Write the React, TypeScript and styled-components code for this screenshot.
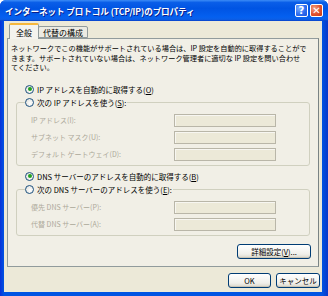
import styled, { createGlobalStyle } from "styled-components";

const Global = createGlobalStyle`
  html, body {
    margin: 0;
    padding: 0;
    background: #ffffff;
  }
  body {
    font-family: "Noto Sans CJK JP", "Noto Sans", sans-serif;
  }
`;

const Win = styled.div`
  width: 328px;
  height: 296px;
  box-sizing: border-box;
  display: flex;
  flex-direction: column;
  background: linear-gradient(to right, #0831d9, #0054e3 4px, #0054e3 calc(100% - 6px), #0a38c8);
  padding: 0 6px 4px 4px;
  border-radius: 6px 6px 0 0;
  overflow: hidden;
`;

const TitleBar = styled.div`
  height: 21px;
  margin: 0 -6px 0 -4px;
  padding: 0 5px 0 5px;
  display: flex;
  align-items: center;
  background: linear-gradient(
    to bottom,
    #3c8cf6 0%,
    #0a5ee8 12%,
    #0054e3 40%,
    #0460f0 80%,
    #0b5fe8 92%,
    #0840c8 100%
  );
`;

const TitleText = styled.div`
  flex: 1;
  color: #ffffff;
  font-size: 8.6px;
  font-weight: bold;
  letter-spacing: -0.1px;
  text-shadow: 1px 1px 0 #0a1e8a;
  white-space: nowrap;
`;

const CapButton = styled.div<{ $close?: boolean }>`
  width: 13px;
  height: 13px;
  margin-left: 2px;
  box-sizing: border-box;
  border: 1px solid #ffffff;
  border-radius: 2px;
  display: flex;
  align-items: center;
  justify-content: center;
  color: #ffffff;
  font-family: "DejaVu Sans", sans-serif;
  font-weight: bold;
  font-size: 10px;
  background: ${(p) =>
    p.$close
      ? "radial-gradient(circle at 30% 30%, #f0a080, #e0512e 55%, #c23a14)"
      : "radial-gradient(circle at 30% 30%, #7eb0ff, #2f6ff0 55%, #1c50d8)"};
`;

const Body = styled.div`
  flex: 1;
  background: #ece9d8;
  padding: 2px 2px 0 3px;
  display: flex;
  flex-direction: column;
`;

const Tabs = styled.div`
  display: flex;
  align-items: flex-end;
  padding-left: 2px;
  position: relative;
  z-index: 1;
`;

const Tab = styled.div<{ $active?: boolean }>`
  box-sizing: border-box;
  height: ${(p) => (p.$active ? "16px" : "12px")};
  padding: 0 ${(p) => (p.$active ? "6px" : "4px")};
  display: flex;
  align-items: center;
  justify-content: center;
  font-size: 8px;
  color: #000000;
  background: ${(p) => (p.$active ? "#f4f3ee" : "#ecebe3")};
  border: 1px solid #919b9c;
  border-bottom: ${(p) => (p.$active ? "none" : "1px solid #919b9c")};
  border-top: ${(p) => (p.$active ? "2px solid #f6b73c" : "1px solid #919b9c")};
  border-radius: 2px 2px 0 0;
  margin-bottom: ${(p) => (p.$active ? "-1px" : "0")};
  margin-left: ${(p) => (p.$active ? "0" : "-1px")};
`;

const Panel = styled.div`
  border: 1px solid #919b9c;
  border-right-color: #7a8384;
  margin-right: 1px;
  padding: 5px 0 7px 3px;
  background: #f1efe6;
  display: flex;
  flex-direction: column;
`;

const Desc = styled.p`
  margin: 0;
  font-size: 7.2px;
  line-height: 9.5px;
  color: #000000;
  white-space: nowrap;
`;

const RadioRow = styled.label<{ $first?: boolean }>`
  display: flex;
  align-items: center;
  height: 11px;
  margin-top: ${(p) => (p.$first ? "11px" : "5px")};
  margin-left: 14px;
  font-size: 7.5px;
  color: #000000;
  white-space: nowrap;
`;

const Radio = styled.span<{ $on?: boolean }>`
  width: 9px;
  height: 9px;
  box-sizing: border-box;
  border-radius: 50%;
  border: 1px solid #1c5180;
  background: radial-gradient(circle at 60% 60%, #ffffff, #dcdcd5);
  margin-right: 3px;
  display: flex;
  align-items: center;
  justify-content: center;
  &::after {
    content: "";
    width: 4px;
    height: 4px;
    border-radius: 50%;
    background: ${(p) => (p.$on ? "#21a121" : "transparent")};
  }
`;

const Group = styled.fieldset`
  margin: 2px 8px 0 5px;
  padding: 6px 0 4px 14px;
  border: 1px solid #d0d0bf;
  border-radius: 3px;
  min-width: 0;
`;

const Legend = styled.legend`
  padding: 0 1px 0 0;
  margin-left: -6px;
  height: 11px;
  display: flex;
  align-items: center;
  font-size: 7.5px;
  color: #000000;
  white-space: nowrap;
`;

const Fields = styled.div`
  display: grid;
  grid-template-columns: 143px 102px;
  row-gap: 4px;
  align-items: center;
`;

const FieldLabel = styled.span`
  font-size: 7px;
  color: #aca899;
  white-space: nowrap;
`;

const Field = styled.div`
  height: 13px;
  box-sizing: border-box;
  border: 1px solid #b9b6a8;
  box-shadow: inset 1px 1px 0 #f7f6f1;
  background: #ece9d8;
`;

const Btn = styled.div<{ $w: number }>`
  width: ${(p) => p.$w}px;
  height: 15px;
  box-sizing: border-box;
  border: 1px solid #003c74;
  border-radius: 3px;
  background: linear-gradient(to bottom, #ffffff, #f0efea 70%, #d9d5c8);
  box-shadow: inset 0 -1px 0 #c9c4b5;
  display: flex;
  align-items: center;
  justify-content: center;
  font-size: 7.5px;
  color: #000000;
`;

const AdvRow = styled.div`
  display: flex;
  justify-content: flex-end;
  margin-top: 8px;
  padding-right: 7px;
`;

const Footer = styled.div`
  display: flex;
  justify-content: flex-end;
  gap: 5px;
  margin-top: 6px;
`;

export default function App() {
  return (
    <>
      <Global />
      <Win>
        <TitleBar>
          <TitleText>インターネット プロトコル (TCP/IP)のプロパティ</TitleText>
          <CapButton>?</CapButton>
          <CapButton $close>✕</CapButton>
        </TitleBar>
        <Body>
          <Tabs>
            <Tab $active>全般</Tab>
            <Tab>代替の構成</Tab>
          </Tabs>
          <Panel>
            <Desc>
              ネットワークでこの機能がサポートされている場合は、IP 設定を自動的に取得することがで
              <br />
              きます。サポートされていない場合は、ネットワーク管理者に適切な IP 設定を問い合わせ
              <br />
              てください。
            </Desc>
            <RadioRow $first>
              <Radio $on />
              IP アドレスを自動的に取得する(<u>O</u>)
            </RadioRow>
            <Group>
              <Legend>
                <Radio />
                次の IP アドレスを使う(<u>S</u>):
              </Legend>
              <Fields>
                <FieldLabel>IP アドレス(I):</FieldLabel>
                <Field />
                <FieldLabel>サブネット マスク(U):</FieldLabel>
                <Field />
                <FieldLabel>デフォルト ゲートウェイ(D):</FieldLabel>
                <Field />
              </Fields>
            </Group>
            <RadioRow>
              <Radio $on />
              DNS サーバーのアドレスを自動的に取得する(<u>B</u>)
            </RadioRow>
            <Group>
              <Legend>
                <Radio />
                次の DNS サーバーのアドレスを使う(<u>E</u>):
              </Legend>
              <Fields>
                <FieldLabel>優先 DNS サーバー(P):</FieldLabel>
                <Field />
                <FieldLabel>代替 DNS サーバー(A):</FieldLabel>
                <Field />
              </Fields>
            </Group>
            <AdvRow>
              <Btn $w={74}>
                詳細設定(<u>V</u>)...
              </Btn>
            </AdvRow>
          </Panel>
          <Footer>
            <Btn $w={43}>OK</Btn>
            <Btn $w={44}>キャンセル</Btn>
          </Footer>
        </Body>
      </Win>
    </>
  );
}
